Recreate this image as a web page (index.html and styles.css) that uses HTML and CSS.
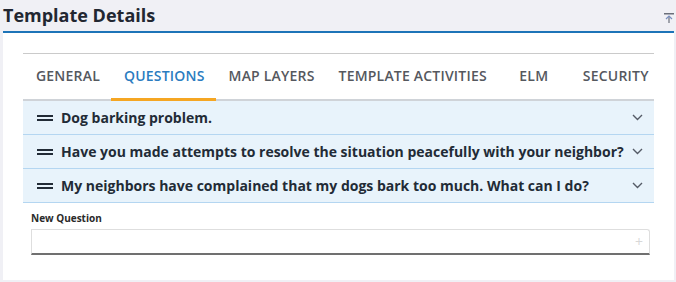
FILE: index.html
```html
<!DOCTYPE html>
<html lang="en">
<head>
    <meta charset="UTF-8">
    <title>Template Details</title>
    <link rel="stylesheet" href="styles.css">
</head>
<body>
    <div class="header">
        <h1>Template Details</h1>
        <svg class="collapse" width="10" height="10" viewBox="0 0 10 10">
            <line x1="0" y1="0.75" x2="10" y2="0.75" stroke="#6b6f7a" stroke-width="1.5"/>
            <line x1="5" y1="3" x2="5" y2="10" stroke="#6b6f7a" stroke-width="1.2"/>
            <polyline points="2,6 5,3 8,6" fill="none" stroke="#7a8fc0" stroke-width="1.2"/>
        </svg>
    </div>

    <div class="panel">
        <div class="tabs">
            <div class="tab">General</div>
            <div class="tab active">Questions</div>
            <div class="tab">Map Layers</div>
            <div class="tab">Template Activities</div>
            <div class="tab wide">ELM</div>
            <div class="tab">Security</div>
        </div>

        <div class="questions">
            <div class="question">
                <span class="handle"></span>
                <span class="text">Dog barking problem.</span>
                <svg class="chevron" width="11" height="7" viewBox="0 0 11 7"><polyline points="1,1 5.5,5.5 10,1" fill="none" stroke="#555b66" stroke-width="1.4"/></svg>
            </div>
            <div class="question">
                <span class="handle"></span>
                <span class="text">Have you made attempts to resolve the situation peacefully with your neighbor?</span>
                <svg class="chevron" width="11" height="7" viewBox="0 0 11 7"><polyline points="1,1 5.5,5.5 10,1" fill="none" stroke="#555b66" stroke-width="1.4"/></svg>
            </div>
            <div class="question">
                <span class="handle"></span>
                <span class="text">My neighbors have complained that my dogs bark too much. What can I do?</span>
                <svg class="chevron" width="11" height="7" viewBox="0 0 11 7"><polyline points="1,1 5.5,5.5 10,1" fill="none" stroke="#555b66" stroke-width="1.4"/></svg>
            </div>
        </div>

        <div class="new-question">
            <label>New Question</label>
            <div class="input">
                <span class="plus">+</span>
            </div>
        </div>
    </div>
</body>
</html>
```

FILE: styles.css
```css
body { margin: 0; background: #f0f0f5; font-family: "Open Sans", Arial, sans-serif; color: #222b36; width: 676px; height: 282px; overflow: hidden; }
.header { display: flex; justify-content: space-between; align-items: flex-start; height: 31px; padding: 0 2px 0 3px; }
h1 { margin: 0; font-size: 18px; font-weight: 700; line-height: 31px; color: #222731; }
.collapse { margin-top: 13px; }
.panel { margin: 0 2px 0 3px; background: #fff; border-top: 2px solid #1d74b8; height: 227px; padding: 20px 20px 0; }
.tabs { display: flex; border-top: 1px solid #cacaca; height: 45px; border-bottom: 2px solid #cfd3d8; }
.tab { padding: 1px 11px 0 13px; font-size: 14px; font-weight: 600; letter-spacing: 0.2px; text-transform: uppercase; color: #55585e; line-height: 41px; border-bottom: 3px solid transparent; margin-bottom: -2px; white-space: nowrap; }
.tab.wide { min-width: 72px; padding: 1px 0 0; text-align: center; }
.tab.active { color: #2b7cbf; border-bottom-color: #f5a623; }
.question { display: flex; align-items: center; height: 33px; background: #e8f3fb; border-bottom: 1px solid #b4d6f1; padding: 0 11px 0 14px; }
.handle { width: 16px; height: 2px; border-top: 2px solid #222b36; border-bottom: 2px solid #222b36; margin-right: 8px; }
.text { flex: 1; font-size: 14px; font-weight: 700; white-space: nowrap; }
.chevron { flex: none; }
.new-question { padding: 7px 4px 0 8px; }
label { display: block; font-size: 10px; font-weight: 700; line-height: 16px; color: #2a2a2a; margin-bottom: 3px; }
.input { height: 23px; border: 1px solid #dedede; border-bottom: 2px solid #707070; border-top-right-radius: 3px; display: flex; justify-content: flex-end; align-items: center; padding-right: 6px; }
.plus { color: #d8d8d8; font-size: 14px; }
```
